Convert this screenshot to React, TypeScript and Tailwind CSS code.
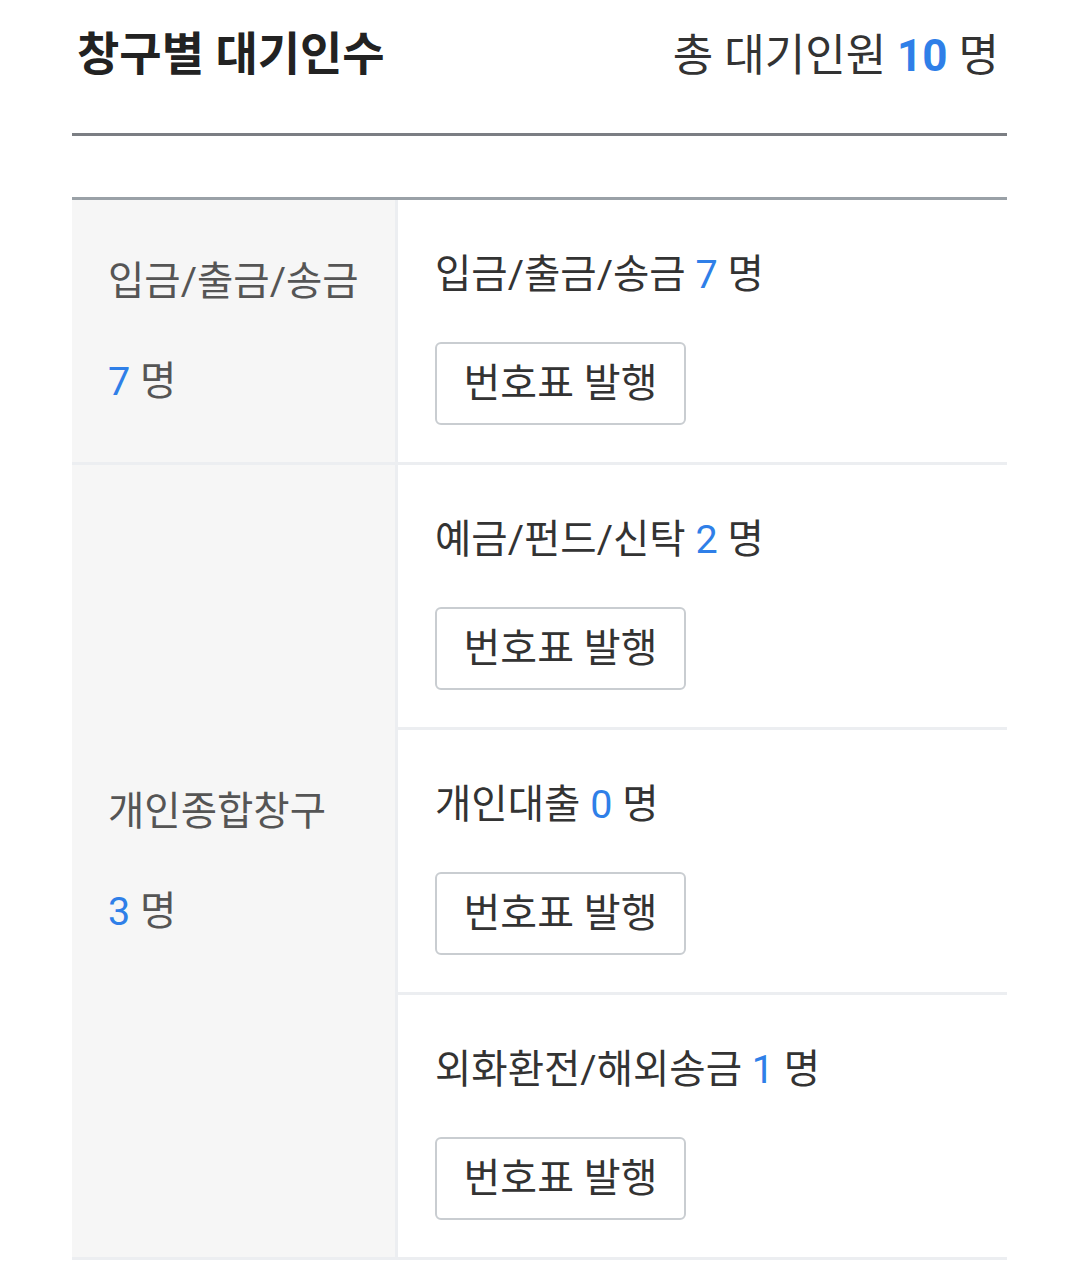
import React from 'react';

type Desk = { name: string; count: number };
type Group = { label: string; count: number; desks: Desk[] };

const groups: Group[] = [
  { label: '입금/출금/송금', count: 7, desks: [{ name: '입금/출금/송금', count: 7 }] },
  {
    label: '개인종합창구',
    count: 3,
    desks: [
      { name: '예금/펀드/신탁', count: 2 },
      { name: '개인대출', count: 0 },
      { name: '외화환전/해외송금', count: 1 },
    ],
  },
];

const font = { fontFamily: "Roboto, 'Noto Sans CJK KR', 'Noto Sans', sans-serif" };

function DeskCell({ desk, first }: { desk: Desk; first: boolean }) {
  return (
    <div className={`pl-[37px] pt-[50px] pb-[37px] ${first ? '' : 'border-t-[3px] border-[#eceef1]'}`}>
      <p className="text-[39.5px] leading-[50px] text-[#333]">
        {desk.name} <span className="text-[#2f7fe8]">{desk.count}</span> 명
      </p>
      <button className="mt-[42px] flex h-[83px] w-[251px] items-center justify-center rounded-[6px] border-2 border-[#c9cdd1] bg-white text-[40px] text-[#333]">
        번호표 발행
      </button>
    </div>
  );
}

export default function App() {
  const total = groups.reduce((s, g) => s + g.count, 0);
  return (
    <div className="min-h-screen bg-white" style={font}>
      <div className="ml-[72px] w-[935px]">
        <div className="flex h-[136px] items-start justify-between border-b-[3px] border-[#7b7e83] pt-[26px] pl-[5px] pr-[8px]">
          <h1 className="text-[46px] font-bold leading-[56px] text-[#222]">창구별 대기인수</h1>
          <p className="pt-[2px] text-[44px] leading-[56px] text-[#333]">
            총 대기인원 <span className="font-bold text-[#2f7fe8]">{total}</span> 명
          </p>
        </div>

        <div className="mt-[61px] border-t-[3px] border-b-[3px] border-[#9aa1a7] border-b-[#eceef1]">
          {groups.map((g, i) => (
            <div key={g.label} className={`flex ${i > 0 ? 'border-t-[3px] border-[#eceef1]' : ''}`}>
              <div className="flex w-[326px] shrink-0 flex-col justify-center gap-[50px] border-r-[3px] border-[#eceef1] bg-[#f6f6f6] pl-[36px] pt-[2px]">
                <p className="text-[39.5px] leading-[50px] text-[#555]">{g.label}</p>
                <p className="text-[39.5px] leading-[50px] text-[#555]">
                  <span className="text-[#2f7fe8]">{g.count}</span> 명
                </p>
              </div>
              <div className="flex-1">
                {g.desks.map((d, j) => (
                  <DeskCell key={d.name} desk={d} first={j === 0} />
                ))}
              </div>
            </div>
          ))}
        </div>
      </div>
    </div>
  );
}
